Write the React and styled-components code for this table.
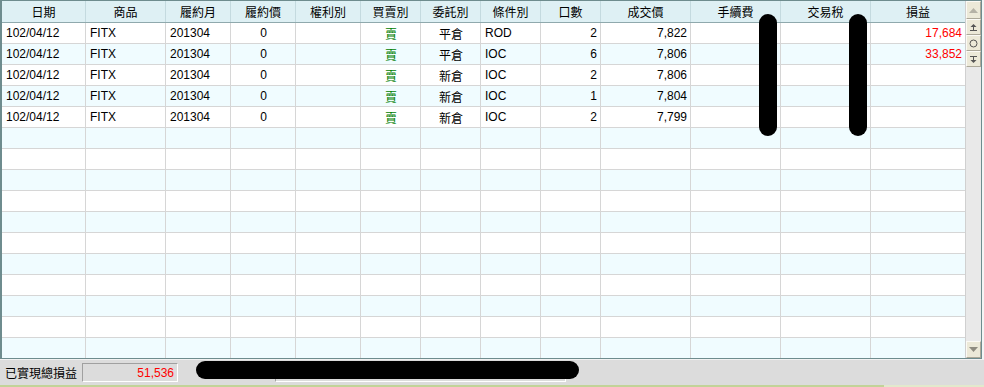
import React from 'react';
import styled, { createGlobalStyle } from 'styled-components';

const GlobalStyle = createGlobalStyle`
  body {
    margin: 0;
    background: #f4f4f4;
    font-family: "Liberation Sans", "Noto Sans CJK TC", sans-serif;
    font-size: 12px;
  }
`;

// widths include the 1px right border
const COLS = [84, 80, 65, 65, 65, 60, 60, 60, 60, 90, 90, 90, 94];
const TEMPLATE = COLS.map((w) => `${w}px`).join(' ');

const columns = [
  { title: '日期', key: 'date', align: 'left' },
  { title: '商品', key: 'prod', align: 'left' },
  { title: '履約月', key: 'month', align: 'left' },
  { title: '履約價', key: 'strike', align: 'center' },
  { title: '權利別', key: 'right', align: 'center' },
  { title: '買賣別', key: 'side', align: 'center' },
  { title: '委託別', key: 'kind', align: 'center' },
  { title: '條件別', key: 'cond', align: 'left' },
  { title: '口數', key: 'qty', align: 'right' },
  { title: '成交價', key: 'price', align: 'right' },
  { title: '手續費', key: 'fee', align: 'right' },
  { title: '交易稅', key: 'tax', align: 'right' },
  { title: '損益', key: 'pl', align: 'right' },
];

const trades = [
  { date: '102/04/12', prod: 'FITX', month: '201304', strike: '0', side: '賣', kind: '平倉', cond: 'ROD', qty: '2', price: '7,822', pl: '17,684' },
  { date: '102/04/12', prod: 'FITX', month: '201304', strike: '0', side: '賣', kind: '平倉', cond: 'IOC', qty: '6', price: '7,806', pl: '33,852' },
  { date: '102/04/12', prod: 'FITX', month: '201304', strike: '0', side: '賣', kind: '新倉', cond: 'IOC', qty: '2', price: '7,806' },
  { date: '102/04/12', prod: 'FITX', month: '201304', strike: '0', side: '賣', kind: '新倉', cond: 'IOC', qty: '1', price: '7,804' },
  { date: '102/04/12', prod: 'FITX', month: '201304', strike: '0', side: '賣', kind: '新倉', cond: 'IOC', qty: '2', price: '7,799' },
];

const TOTAL_ROWS = 16;

const Page = styled.div`
  position: relative;
  width: 984px;
  height: 387px;
  display: flex;
  flex-direction: column;
  overflow: hidden;
`;

const Frame = styled.div`
  display: flex;
  width: 982px;
  height: 359px;
  box-sizing: border-box;
  border: 1px solid #6e8c8e;
  border-left-width: 2px;
  background: #fff;
`;

const TableArea = styled.div`
  width: 963px;
  display: flex;
  flex-direction: column;
`;

const HeaderRow = styled.div`
  display: grid;
  grid-template-columns: ${TEMPLATE};
  height: 21px;
  background: #def0f4;
  border-bottom: 1px solid #8fa9ad;
`;

const HeaderCell = styled.div`
  display: flex;
  align-items: center;
  justify-content: center;
  border-right: 1px solid #c4dadf;
  color: #000;
  font-family: "Noto Sans CJK TC", sans-serif;
  font-size: 12px;
  &:last-child {
    border-right: none;
  }
`;

const Body = styled.div`
  flex: 1;
  overflow: hidden;
`;

const Row = styled.div`
  display: grid;
  grid-template-columns: ${TEMPLATE};
  height: 21px;
  background: ${(p) => (p.$alt ? '#f0fcff' : '#ffffff')};
`;

const Cell = styled.div`
  display: flex;
  align-items: center;
  justify-content: ${(p) =>
    p.$align === 'right' ? 'flex-end' : p.$align === 'center' ? 'center' : 'flex-start'};
  padding: 0 3px 0 4px;
  box-sizing: border-box;
  border-right: 1px solid #d6d6d6;
  border-bottom: 1px solid #d6d6d6;
  color: ${(p) => p.$color || '#000'};
  font-size: 12px;
  white-space: nowrap;
  &:last-child {
    border-right: none;
  }
`;

const Scrollbar = styled.div`
  width: 16px;
  display: flex;
  flex-direction: column;
  justify-content: space-between;
  background: #e9e9e9;
  border-left: 1px solid #d0d0d0;
  box-sizing: border-box;
`;

const ScrollGroup = styled.div`
  display: flex;
  flex-direction: column;
`;

const ScrollButton = styled.div`
  width: 15px;
  height: ${(p) => p.$h || 16}px;
  box-sizing: border-box;
  display: flex;
  align-items: center;
  justify-content: center;
  background: #ece9d8;
  border: 1px solid;
  border-color: #fbfaf5 #aca899 #aca899 #fbfaf5;
`;

const StatusBar = styled.div`
  height: 26px;
  display: flex;
  align-items: center;
  background: #dcdcdc;
  border-top: 1px solid #f2f2f2;
  box-sizing: border-box;
  padding-left: 5px;
`;

const StatusLabel = styled.span`
  font-family: "Noto Sans CJK TC", sans-serif;
  font-size: 12px;
  color: #000;
  width: 77px;
`;

const ValueBox = styled.div`
  width: 96px;
  height: 19px;
  box-sizing: border-box;
  display: flex;
  align-items: center;
  justify-content: flex-end;
  padding-right: 3px;
  background: #dcdcdc;
  border: 1px solid;
  border-color: #a0a0a0 #ffffff #ffffff #a0a0a0;
  color: #ff0000;
  font-size: 12px;
`;

const SunkenBox = styled.div`
  margin-left: 97px;
  width: 291px;
  height: 18px;
  box-sizing: border-box;
  border: 1px solid;
  border-color: #a0a0a0 #ffffff #ffffff #a0a0a0;
`;

const BottomLine = styled.div`
  height: 2px;
  background: linear-gradient(to right, #c2d398 0, #c2d398 884px, #e2e9cc 884px);
`;

const Redact = styled.div`
  position: absolute;
  background: #000;
  border-radius: 9px;
  left: ${(p) => p.$x}px;
  top: ${(p) => p.$y}px;
  width: ${(p) => p.$w}px;
  height: ${(p) => p.$h}px;
`;

const Tri = ({ dir, color }) => (
  <svg width="9" height="7" viewBox="0 0 9 7">
    {dir === 'up' ? (
      <polygon points="4.5,1 9,6 0,6" fill={color} />
    ) : (
      <polygon points="0,1 9,1 4.5,6" fill={color} />
    )}
  </svg>
);

const TopIcon = () => (
  <svg width="9" height="9" viewBox="0 0 9 9">
    <polygon points="4.5,1 7.5,4 1.5,4" fill="#555" />
    <rect x="4" y="4" width="1" height="3" fill="#555" />
    <rect x="1" y="7" width="7" height="1" fill="#555" />
  </svg>
);

const BottomIcon = () => (
  <svg width="9" height="9" viewBox="0 0 9 9">
    <rect x="1" y="1" width="7" height="1" fill="#555" />
    <rect x="4" y="2" width="1" height="3" fill="#555" />
    <polygon points="1.5,5 7.5,5 4.5,8" fill="#555" />
  </svg>
);

const CircleIcon = () => (
  <svg width="9" height="9" viewBox="0 0 9 9">
    <circle cx="4.5" cy="4.5" r="3.5" fill="none" stroke="#555" strokeWidth="1" />
  </svg>
);

const colorFor = (key) => {
  if (key === 'side') return '#008000';
  if (key === 'pl') return '#ff0000';
  return undefined;
};

export default function App() {
  const rows = Array.from({ length: TOTAL_ROWS }, (_, i) => trades[i] || null);

  return (
    <Page>
      <GlobalStyle />
      <Frame>
        <TableArea>
          <HeaderRow>
            {columns.map((c) => (
              <HeaderCell key={c.key}>{c.title}</HeaderCell>
            ))}
          </HeaderRow>
          <Body>
            {rows.map((r, i) => (
              <Row key={i} $alt={i % 2 === 1}>
                {columns.map((c) => (
                  <Cell key={c.key} $align={c.align} $color={colorFor(c.key)}>
                    {r ? r[c.key] || '' : ''}
                  </Cell>
                ))}
              </Row>
            ))}
          </Body>
        </TableArea>
        <Scrollbar>
          <ScrollGroup>
            <ScrollButton $h={18}><Tri dir="up" color="#b5b2a6" /></ScrollButton>
            <ScrollButton><TopIcon /></ScrollButton>
            <ScrollButton><CircleIcon /></ScrollButton>
            <ScrollButton><BottomIcon /></ScrollButton>
          </ScrollGroup>
          <ScrollButton $h={17}><Tri dir="down" color="#8f8c80" /></ScrollButton>
        </Scrollbar>
      </Frame>
      <StatusBar>
        <StatusLabel>已實現總損益</StatusLabel>
        <ValueBox>51,536</ValueBox>
        <SunkenBox />
      </StatusBar>
      <BottomLine />

      <Redact $x={759} $y={14} $w={18} $h={122} />
      <Redact $x={849} $y={14} $w={18} $h={122} />
      <Redact $x={196} $y={361} $w={383} $h={18} />
    </Page>
  );
}
